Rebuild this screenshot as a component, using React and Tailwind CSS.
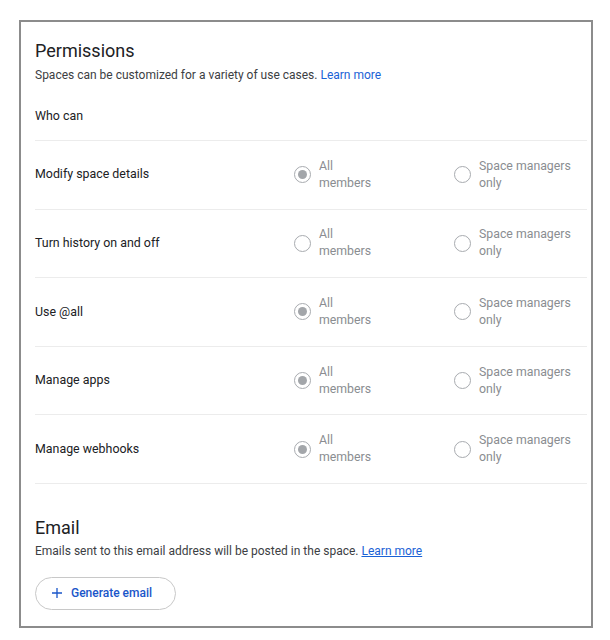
const rows = [
  { label: "Modify space details", all: true },
  { label: "Turn history on and off", all: false },
  { label: "Use @all", all: true },
  { label: "Manage apps", all: true },
  { label: "Manage webhooks", all: true },
];

const Radio = ({ checked, top, bottom }) => (
  <div className="flex items-center gap-[8px]">
    <span className="w-[17px] h-[17px] rounded-full border-[1.5px] border-[#a8abaf] flex items-center justify-center shrink-0">
      {checked && <span className="w-[9px] h-[9px] rounded-full bg-[#a3a6aa]"></span>}
    </span>
    <div className="text-[12.3px] leading-[17px] text-[#8a8d91]">
      <div>{top}</div>
      <div>{bottom}</div>
    </div>
  </div>
);

const App = () => {
  return (
    <div className="bg-white min-h-[640px] pt-[20px] pl-[19px]" style={{ fontFamily: "Roboto, 'Liberation Sans', sans-serif" }}>
      <div className="w-[574px] h-[608px] border-2 border-[#8c8c8c] pl-[14px] pr-[4px] pt-[17px]">
        {/* permissions */}
        <h2 className="text-[18px] leading-[24px] text-[#202124]">Permissions</h2>
        <p className="text-[12px] leading-[16px] text-[#3c4043] mt-[4px]">
          Spaces can be customized for a variety of use cases.{" "}
          <span className="text-[#1a62d6]">Learn more</span>
        </p>
        <div className="text-[12.4px] leading-[16px] text-[#202124] mt-[25px] pb-[16px] border-b border-[#ececec]">
          Who can
        </div>

        {rows.map((row) => (
          <div key={row.label} className="h-[68.6px] border-b border-[#ececec] flex items-center">
            <div className="w-[259px] text-[12.4px] text-[#202124]">{row.label}</div>
            <div className="w-[160px]">
              <Radio checked={row.all} top="All" bottom="members" />
            </div>
            <div>
              <Radio checked={false} top="Space managers" bottom="only" />
            </div>
          </div>
        ))}

        {/* email */}
        <h2 className="text-[18px] leading-[24px] text-[#202124] mt-[32px]">Email</h2>
        <p className="text-[12px] leading-[16px] text-[#3c4043] mt-[3px]">
          Emails sent to this email address will be posted in the space.{" "}
          <span className="text-[#1a62d6] underline">Learn more</span>
        </p>
        <button className="mt-[18px] w-[141px] h-[33px] rounded-full border border-[#c8c8c8] flex items-center pl-[15px] gap-[8px] text-[12px] text-[#1a56c9] font-medium">
          <svg width="12" height="12" viewBox="0 0 12 12">
            <path d="M6 1v10M1 6h10" stroke="#1a56c9" strokeWidth="1.3" fill="none" />
          </svg>
          Generate email
        </button>
      </div>
    </div>
  );
};

export default App;
